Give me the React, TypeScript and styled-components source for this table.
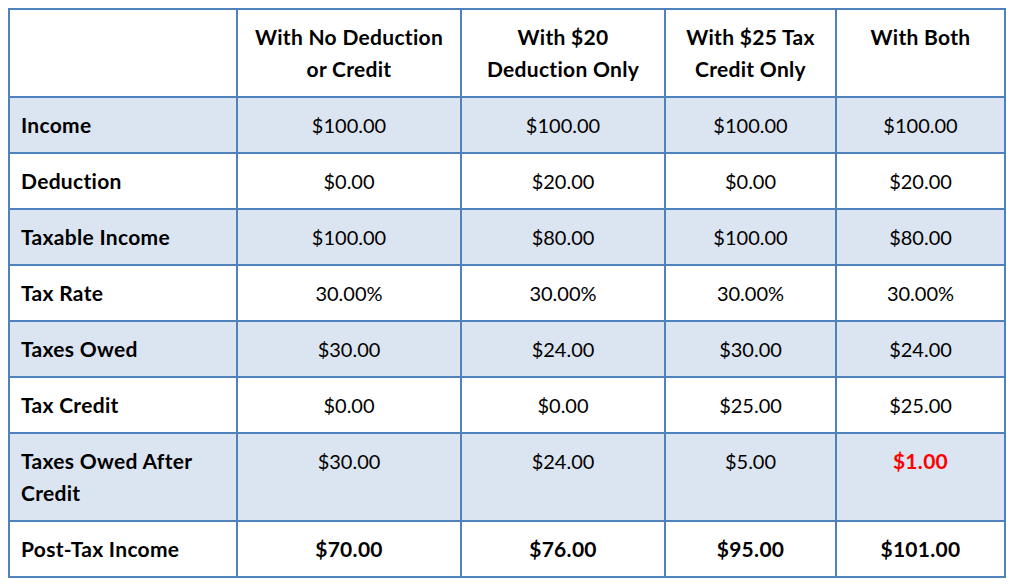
import React from 'react';
import styled, { createGlobalStyle } from 'styled-components';

const GlobalStyle = createGlobalStyle`
    body {
        margin: 8px;
        background: #ffffff;
        font-family: 'Lato', 'Liberation Sans', sans-serif;
    }
`;

type Row = {
    label: string;
    values: string[];
    shaded?: boolean;
    bold?: boolean;
};

const headers = ['With No Deduction or Credit', 'With $20 Deduction Only', 'With $25 Tax Credit Only', 'With Both'];

const rows: Row[] = [
    { label: 'Income', values: ['$100.00', '$100.00', '$100.00', '$100.00'], shaded: true },
    { label: 'Deduction', values: ['$0.00', '$20.00', '$0.00', '$20.00'] },
    { label: 'Taxable Income', values: ['$100.00', '$80.00', '$100.00', '$80.00'], shaded: true },
    { label: 'Tax Rate', values: ['30.00%', '30.00%', '30.00%', '30.00%'] },
    { label: 'Taxes Owed', values: ['$30.00', '$24.00', '$30.00', '$24.00'], shaded: true },
    { label: 'Tax Credit', values: ['$0.00', '$0.00', '$25.00', '$25.00'] },
    { label: 'Taxes Owed After Credit', values: ['$30.00', '$24.00', '$5.00', '$1.00'], shaded: true },
    { label: 'Post-Tax Income', values: ['$70.00', '$76.00', '$95.00', '$101.00'], bold: true },
];

export default function App() {
    return (
        <>
            <GlobalStyle />
            <Table>
                <Cell />
                {headers.map((h) => (
                    <HeadCell key={h}>{h}</HeadCell>
                ))}
                {rows.map((row) => (
                    <React.Fragment key={row.label}>
                        <LabelCell $shaded={row.shaded}>{row.label}</LabelCell>
                        {row.values.map((v, i) => (
                            <ValueCell
                                key={i}
                                $shaded={row.shaded}
                                $bold={row.bold || v === '$1.00'}
                                $alert={v === '$1.00'}
                            >
                                {v}
                            </ValueCell>
                        ))}
                    </React.Fragment>
                ))}
            </Table>
        </>
    );
}

const Table = styled.div`
    display: grid;
    grid-template-columns: 226px 222px 202px 169px 167px;
    gap: 2px;
    padding: 2px;
    width: 998px;
    box-sizing: border-box;
    background: #4f81bd;
`;

const Cell = styled.div<{ $shaded?: boolean }>`
    background: ${({ $shaded }) => ($shaded ? '#dbe5f1' : '#ffffff')};
    padding: 11px 10px;
    font-size: 20px;
    line-height: 32px;
    color: #000000;
`;

const HeadCell = styled(Cell)`
    font-weight: 700;
    font-size: 21px;
    letter-spacing: 0.3px;
    text-align: center;
    padding: 11px 12px;
`;

const LabelCell = styled(Cell)`
    font-weight: 700;
    font-size: 21px;
    letter-spacing: 0.3px;
    text-align: left;
    padding-left: 11px;
`;

const ValueCell = styled(Cell)<{ $bold?: boolean; $alert?: boolean }>`
    text-align: center;
    font-weight: ${({ $bold }) => ($bold ? 700 : 400)};
    font-size: ${({ $bold }) => ($bold ? '21px' : '20px')};
    letter-spacing: ${({ $bold }) => ($bold ? '0.3px' : '0')};
    color: ${({ $alert }) => ($alert ? '#ff0000' : '#000000')};
`;
